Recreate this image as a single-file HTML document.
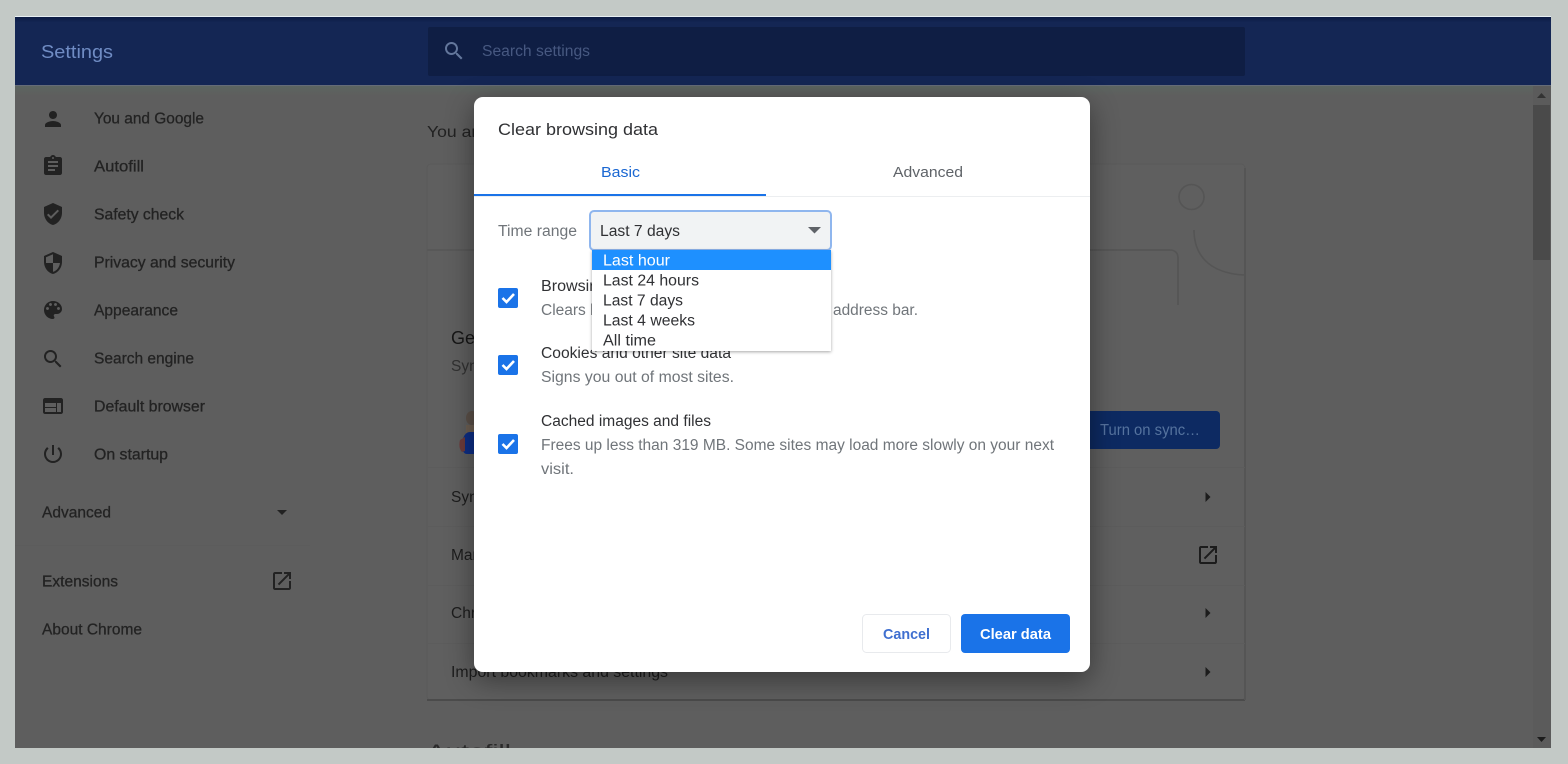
<!DOCTYPE html>
<html><head><meta charset="utf-8"><title>Settings</title>
<style>
html,body{margin:0;padding:0;width:1568px;height:764px;overflow:hidden;background:#c3c9c6}
svg{display:block;font-family:"Liberation Sans",Arial,sans-serif}
</style></head><body>
<svg width="1568" height="764" viewBox="0 0 1568 764" xmlns="http://www.w3.org/2000/svg">
<defs>
<linearGradient id="hd" x1="0" y1="0" x2="0" y2="1"><stop offset="0" stop-color="#0b1b44"/><stop offset=".08" stop-color="#142654"/><stop offset="1" stop-color="#142654"/></linearGradient>
<linearGradient id="tp" x1="0" y1="0" x2="0" y2="1"><stop offset="0" stop-color="#5c6560"/><stop offset="1" stop-color="#5e5e5e"/></linearGradient>
<filter id="sh" x="-15%" y="-15%" width="130%" height="130%"><feDropShadow dx="0" dy="8" stdDeviation="14" flood-color="#000" flood-opacity=".42"/></filter>
<filter id="ds" x="-5%" y="-5%" width="110%" height="115%"><feDropShadow dx="0" dy="1" stdDeviation="1.5" flood-color="#000" flood-opacity=".35"/></filter>
<filter id="soft"><feGaussianBlur stdDeviation=".35"/></filter>
<clipPath id="pg"><rect x="15" y="17" width="1536" height="731"/></clipPath>
</defs>

<rect x="15" y="16" width="1536" height="1" fill="#e6eef2"/>
<g clip-path="url(#pg)">
<rect x="15" y="85" width="1536" height="663" fill="#5e5e5e"/>
<rect x="15" y="86" width="1536" height="10" fill="url(#tp)"/>
<rect x="15" y="17" width="1536" height="68" fill="url(#hd)"/>
<rect x="15" y="85" width="1536" height="1" fill="#656b78"/>
<rect x="428" y="27" width="817" height="49" rx="2" fill="#0f1e44"/>

<g filter="url(#soft)">
<text x="41" y="58" font-size="18" fill="#6f8cc4" textLength="72" lengthAdjust="spacingAndGlyphs">Settings</text>
<g transform="translate(442,39)" fill="#64779c"><path d="M15.500 14h-.79l-.28-.27C15.410 12.590 16 11.110 16 9.500 16 5.910 13.090 3 9.500 3S3 5.910 3 9.500 5.910 16 9.500 16c1.610 0 3.090-.59 4.230-1.570l.27.28v.79l5 4.990L20.490 19l-4.990-5zm-6 0C7.010 14 5 11.990 5 9.500S7.010 5 9.500 5 14 7.010 14 9.500 11.990 14 9.500 14z"/></g>
<text x="482" y="56" font-size="15.500" fill="#475981" textLength="108" lengthAdjust="spacingAndGlyphs">Search settings</text>

<!-- sidebar icons -->
<g fill="#222">
<g transform="translate(41,107)"><path d="M12 12c2.210 0 4-1.790 4-4s-1.790-4-4-4-4 1.790-4 4 1.790 4 4 4zm0 2c-2.670 0-8 1.340-8 4v2h16v-2c0-2.660-5.330-4-8-4z"/></g>
<g transform="translate(41,154)"><path d="M19 3h-4.180C14.400 1.840 13.300 1 12 1c-1.300 0-2.400.84-2.820 2H5c-1.100 0-2 .9-2 2v14c0 1.100.9 2 2 2h14c1.100 0 2-.9 2-2V5c0-1.100-.9-2-2-2zm-7 0c.55 0 1 .45 1 1s-.45 1-1 1-1-.45-1-1 .45-1 1-1zm2 14H7v-2h7v2zm3-4H7v-2h10v2zm0-4H7V7h10v2z"/></g>
<g transform="translate(41,202)"><path d="M12 1L3 5v6c0 5.550 3.840 10.740 9 12 5.160-1.260 9-6.450 9-12V5l-9-4zm-2 16l-4-4 1.410-1.410L10 14.170l6.590-6.590L18 9l-8 8z"/></g>
<g transform="translate(41,251)"><path d="M12 1L3 5v6c0 5.550 3.840 10.740 9 12 5.160-1.260 9-6.450 9-12V5l-9-4zm0 10.990h7c-.53 4.120-3.280 7.790-7 8.940V12H5V6.300l7-3.110v8.800z"/></g>
<g transform="translate(41,298)"><path d="M12 3c-4.970 0-9 4.030-9 9s4.030 9 9 9c.83 0 1.500-.67 1.500-1.500 0-.39-.15-.74-.39-1.010-.23-.26-.38-.61-.38-.99 0-.83.67-1.500 1.500-1.500H16c2.760 0 5-2.240 5-5 0-4.420-4.030-8-9-8zm-5.500 9c-.83 0-1.500-.67-1.500-1.500S5.670 9 6.500 9 8 9.670 8 10.500 7.330 12 6.500 12zm3-4C8.670 8 8 7.330 8 6.500S8.670 5 9.500 5s1.500.67 1.500 1.500S10.330 8 9.500 8zm5 0c-.83 0-1.500-.67-1.500-1.500S13.670 5 14.500 5s1.500.67 1.500 1.500S15.330 8 14.500 8zm3 4c-.83 0-1.500-.67-1.500-1.500S16.670 9 17.500 9s1.500.67 1.500 1.500-.67 1.500-1.500 1.500z"/></g>
<g transform="translate(41,347)"><path d="M15.500 14h-.79l-.28-.27C15.410 12.590 16 11.110 16 9.500 16 5.910 13.090 3 9.500 3S3 5.910 3 9.500 5.910 16 9.500 16c1.610 0 3.090-.59 4.230-1.570l.27.28v.79l5 4.990L20.490 19l-4.990-5zm-6 0C7.010 14 5 11.990 5 9.500S7.010 5 9.500 5 14 7.010 14 9.500 11.990 14 9.500 14z"/></g>
<g transform="translate(41,394)"><path d="M20 4H4c-1.100 0-1.990.9-1.990 2L2 18c0 1.100.9 2 2 2h16c1.100 0 2-.9 2-2V6c0-1.100-.9-2-2-2zm-5 14H4v-4h11v4zm0-5H4V9h11v4zm5 5h-4V9h4v9z"/></g>
<g transform="translate(41,442)"><path d="M13 3h-2v10h2V3zm4.830 2.170l-1.420 1.420C17.990 7.860 19 9.810 19 12c0 3.870-3.130 7-7 7s-7-3.130-7-7c0-2.190 1.010-4.140 2.580-5.420L6.170 5.170C4.230 6.820 3 9.260 3 12c0 4.970 4.030 9 9 9s9-4.030 9-9c0-2.740-1.230-5.180-3.170-6.830z"/></g>
<g transform="translate(270,569)"><path d="M19 19H5V5h7V3H5c-1.110 0-2 .9-2 2v14c0 1.100.89 2 2 2h14c1.100 0 2-.9 2-2v-7h-2v7zM14 3v2h3.590l-9.830 9.830 1.410 1.410L19 6.410V10h2V3h-7z"/></g>
<path d="M277 510h10l-5 5z"/>
</g>

<!-- sidebar text -->
<g font-size="15.500" fill="#242424" stroke="#242424" stroke-width=".3">
<text x="94" y="123.500" textLength="110" lengthAdjust="spacingAndGlyphs">You and Google</text>
<text x="94" y="171.500" textLength="50" lengthAdjust="spacingAndGlyphs">Autofill</text>
<text x="94" y="219.500" textLength="90" lengthAdjust="spacingAndGlyphs">Safety check</text>
<text x="94" y="267.500" textLength="141" lengthAdjust="spacingAndGlyphs">Privacy and security</text>
<text x="94" y="315.500" textLength="84" lengthAdjust="spacingAndGlyphs">Appearance</text>
<text x="94" y="363.500" textLength="100" lengthAdjust="spacingAndGlyphs">Search engine</text>
<text x="94" y="411.500" textLength="111" lengthAdjust="spacingAndGlyphs">Default browser</text>
<text x="94" y="459.500" textLength="74" lengthAdjust="spacingAndGlyphs">On startup</text>
<text x="42" y="517.500" textLength="69" lengthAdjust="spacingAndGlyphs">Advanced</text>
<text x="42" y="586.500" textLength="76" lengthAdjust="spacingAndGlyphs">Extensions</text>
<text x="42" y="634.500" textLength="100" lengthAdjust="spacingAndGlyphs">About Chrome</text>
</g>
<rect x="15" y="545" width="295" height="1" fill="#5b5b5b"/>

<!-- main content -->
<text x="427" y="137" font-size="16" fill="#222" textLength="60" lengthAdjust="spacingAndGlyphs">You are</text>
<rect x="427" y="164" width="818" height="536" rx="4" fill="#5f5f5f" stroke="#5a5a5a" stroke-width="1"/>
<rect x="427" y="699" width="818" height="2" fill="#4c4c4c"/>
<rect x="1244" y="168" width="2" height="532" fill="#555"/>
<g fill="none" stroke="#555" stroke-width="1.600">
<circle cx="1191.500" cy="197" r="12.500"/>
<path d="M1194 230c0 22 12 43 50 45"/>
<path d="M1090 250h80c5 0 8 3 8 8v47"/>
<path d="M427 250h60" stroke-width="1.200"/>
</g>
<text x="451" y="344" font-size="18" fill="#191919">Get</text>
<text x="451" y="371" font-size="15.500" fill="#303030">Sync</text>
<!-- avatar -->
<ellipse cx="472" cy="418" rx="6" ry="7" fill="#5c5148"/>
<rect x="466" y="425" width="12" height="8" fill="#6e6053"/>
<path d="M462 446c0-8 3-14 8-14h8v22h-11c-3 0-5-3-5-8z" fill="#0f2f86"/>
<path d="M460 440c-1 4-1 9 2 12l3-1v-14z" fill="#6d3a3a"/>
<rect x="1085" y="411" width="135" height="38" rx="4" fill="#0a2c62"/>
<text x="1100" y="435" font-size="15.500" fill="#56729e" textLength="100" lengthAdjust="spacingAndGlyphs">Turn on sync…</text>
<rect x="427" y="467" width="818" height="1" fill="#5b5b5b"/>
<rect x="427" y="526" width="818" height="1" fill="#5b5b5b"/>
<rect x="427" y="585" width="818" height="1" fill="#5b5b5b"/>
<rect x="427" y="643" width="818" height="1" fill="#5b5b5b"/>
<g font-size="15.500" fill="#1e1e1e">
<text x="451" y="502">Sync and Google services</text>
<text x="451" y="560">Manage your Google Account</text>
<text x="451" y="618">Chrome name and picture</text>
<text x="451" y="677" textLength="217" lengthAdjust="spacingAndGlyphs">Import bookmarks and settings</text>
<text x="427" y="757.500" font-size="18" fill="#2a2a2a" textLength="84" lengthAdjust="spacingAndGlyphs">Autofill</text>
</g>
<g fill="#1a1a1a">
<path d="M1205.500 492l5 5-5 5z"/><path d="M1205.500 608l5 5-5 5z"/><path d="M1205.500 667l5 5-5 5z"/>
<g transform="translate(1196,543)"><path d="M19 19H5V5h7V3H5c-1.110 0-2 .9-2 2v14c0 1.100.89 2 2 2h14c1.100 0 2-.9 2-2v-7h-2v7zM14 3v2h3.590l-9.830 9.830 1.410 1.410L19 6.410V10h2V3h-7z"/></g>
</g>
</g>

<!-- scrollbar -->
<rect x="1533" y="86" width="18" height="662" fill="#5b5b5b"/>
<rect x="1533" y="105" width="17" height="155" fill="#4a4a4a"/>
<path d="M1537 98l4.500-5 4.500 5z" fill="#333"/>
<path d="M1537 737h9l-4.500 5z" fill="#1c1c1c"/>
</g>

<!-- dialog -->
<rect x="474" y="97" width="616" height="575" rx="9" fill="#fff" filter="url(#sh)"/>
<text x="498" y="135" font-size="17" fill="#303134" textLength="160" lengthAdjust="spacingAndGlyphs">Clear browsing data</text>
<text x="601" y="177" font-size="15" fill="#1a67d2" textLength="39" lengthAdjust="spacingAndGlyphs">Basic</text>
<text x="893" y="177" font-size="15" fill="#5f6368" textLength="70" lengthAdjust="spacingAndGlyphs">Advanced</text>
<rect x="474" y="196" width="616" height="1" fill="#eceef0"/>
<rect x="474" y="194" width="292" height="2" fill="#1a73e8"/>

<text x="498" y="236" font-size="15.500" fill="#70757a" textLength="79" lengthAdjust="spacingAndGlyphs">Time range</text>
<rect x="590" y="211" width="241" height="39" rx="4" fill="#f1f3f4" stroke="#8fb6ee" stroke-width="2"/>
<text x="600" y="236" font-size="15.500" fill="#303134" textLength="80" lengthAdjust="spacingAndGlyphs">Last 7 days</text>
<path d="M808 227h13l-6.500 6.500z" fill="#5f6368"/>

<g font-size="15.500">
<text x="541" y="291" fill="#303134" textLength="118" lengthAdjust="spacingAndGlyphs">Browsing history</text>
<text x="541" y="315" fill="#70757a">Clears history</text>
<text x="833" y="315" fill="#70757a" textLength="85" lengthAdjust="spacingAndGlyphs">address bar.</text>
<text x="541" y="358" fill="#303134" textLength="190" lengthAdjust="spacingAndGlyphs">Cookies and other site data</text>
<text x="541" y="382" fill="#70757a" textLength="193" lengthAdjust="spacingAndGlyphs">Signs you out of most sites.</text>
<text x="541" y="426" fill="#303134" textLength="170" lengthAdjust="spacingAndGlyphs">Cached images and files</text>
<text x="541" y="450" fill="#70757a" textLength="513" lengthAdjust="spacingAndGlyphs">Frees up less than 319 MB. Some sites may load more slowly on your next</text>
<text x="541" y="474" fill="#70757a" textLength="33" lengthAdjust="spacingAndGlyphs">visit.</text>
</g>

<g>
<rect x="498" y="288" width="20" height="20" rx="2" fill="#1a73e8"/>
<path d="M502.500 298l4 4 7.500-8" fill="none" stroke="#fff" stroke-width="2.600"/>
<rect x="498" y="355" width="20" height="20" rx="2" fill="#1a73e8"/>
<path d="M502.500 365l4 4 7.500-8" fill="none" stroke="#fff" stroke-width="2.600"/>
<rect x="498" y="434" width="20" height="20" rx="2" fill="#1a73e8"/>
<path d="M502.500 444l4 4 7.500-8" fill="none" stroke="#fff" stroke-width="2.600"/>
</g>

<!-- dropdown -->
<rect x="592" y="250" width="239" height="101" fill="#fff" filter="url(#ds)"/>
<rect x="592" y="250" width="239" height="20" fill="#1e90ff"/>
<g font-size="15.500" fill="#303134">
<text x="603" y="265.500" fill="#fff" textLength="67" lengthAdjust="spacingAndGlyphs">Last hour</text>
<text x="603" y="285.500" textLength="96" lengthAdjust="spacingAndGlyphs">Last 24 hours</text>
<text x="603" y="305.500" textLength="80" lengthAdjust="spacingAndGlyphs">Last 7 days</text>
<text x="603" y="325.500" textLength="92" lengthAdjust="spacingAndGlyphs">Last 4 weeks</text>
<text x="603" y="345.500" textLength="53" lengthAdjust="spacingAndGlyphs">All time</text>
</g>

<!-- buttons -->
<rect x="862.500" y="614.500" width="88" height="38" rx="4" fill="#fff" stroke="#e8eaed"/>
<text x="883" y="639" font-size="15" font-weight="bold" fill="#3f6fd0" textLength="47" lengthAdjust="spacingAndGlyphs">Cancel</text>
<rect x="961" y="614" width="109" height="39" rx="4" fill="#1a73e8"/>
<text x="980" y="639" font-size="15" font-weight="bold" fill="#fff" textLength="71" lengthAdjust="spacingAndGlyphs">Clear data</text>
</svg>
</body></html>
